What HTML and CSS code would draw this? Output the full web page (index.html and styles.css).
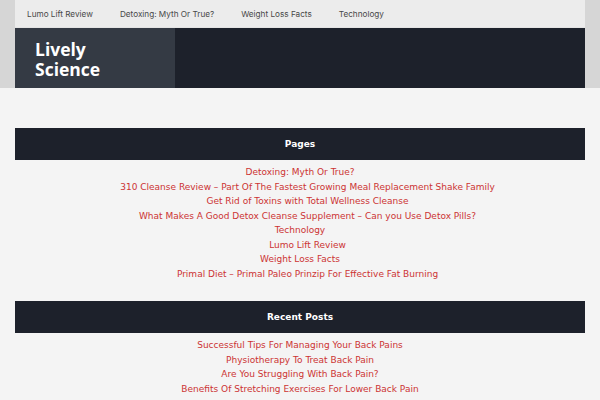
FILE: index.html
```html
<!DOCTYPE html>
<html>
<head>
<meta charset="utf-8">
<link rel="stylesheet" href="styles.css">
</head>
<body>
<div class="top">
  <div class="wrap">
    <nav class="nav">
      <a href="#">Lumo Lift Review</a>
      <a href="#">Detoxing: Myth Or True?</a>
      <a href="#">Weight Loss Facts</a>
      <a href="#">Technology</a>
    </nav>
    <header class="header">
      <div class="brand">Lively<br>Science</div>
    </header>
  </div>
</div>
<main class="main">
  <section class="widget">
    <h2 class="widget-title">Pages</h2>
    <ul class="links">
      <li><a href="#">Detoxing: Myth Or True?</a></li>
      <li class="sub"><a href="#">310 Cleanse Review – Part Of The Fastest Growing Meal Replacement Shake Family</a></li>
      <li class="sub"><a href="#">Get Rid of Toxins with Total Wellness Cleanse</a></li>
      <li class="sub"><a href="#">What Makes A Good Detox Cleanse Supplement – Can you Use Detox Pills?</a></li>
      <li><a href="#">Technology</a></li>
      <li class="sub"><a href="#">Lumo Lift Review</a></li>
      <li><a href="#">Weight Loss Facts</a></li>
      <li class="sub"><a href="#">Primal Diet – Primal Paleo Prinzip For Effective Fat Burning</a></li>
    </ul>
  </section>
  <section class="widget">
    <h2 class="widget-title">Recent Posts</h2>
    <ul class="links">
      <li><a href="#">Successful Tips For Managing Your Back Pains</a></li>
      <li><a href="#">Physiotherapy To Treat Back Pain</a></li>
      <li><a href="#">Are You Struggling With Back Pain?</a></li>
      <li><a href="#">Benefits Of Stretching Exercises For Lower Back Pain</a></li>
    </ul>
  </section>
</main>
</body>
</html>
```

FILE: styles.css
```css
html, body {
  margin: 0;
  padding: 0;
}
body {
  background: #f4f4f4;
  font-family: "DejaVu Sans", Verdana, sans-serif;
}
.top {
  background: #d6d6d6;
  padding: 0 15px;
}
.wrap {
  background: #ececec;
}
.nav {
  display: flex;
  height: 28px;
  align-items: center;
  padding-left: 12px;
  gap: 27px;
  border-bottom: 1px solid #e4e4e4;
  box-sizing: border-box;
}
.nav a {
  font-family: Inter, "Open Sans", sans-serif;
  font-size: 8.2px;
  color: #484848;
  text-decoration: none;
}
.header {
  background: #1d212b;
  height: 60px;
  display: flex;
}
.brand {
  width: 160px;
  background: #343a44;
  color: #fff;
  font-family: "Open Sans", sans-serif;
  font-weight: 700;
  font-size: 17.5px;
  line-height: 20px;
  padding: 11px 0 0 20px;
  box-sizing: border-box;
}
.main {
  padding: 40px 15px 0;
}
.widget {
  margin-bottom: 20px;
}
.widget-title {
  background: #1d212b;
  color: #fff;
  margin: 0;
  height: 32px;
  line-height: 32px;
  text-align: center;
  font-size: 9px;
  font-weight: 700;
}
.links {
  list-style: none;
  margin: 0;
  padding: 5px 0 0;
  text-align: center;
}
.links li {
  font-size: 9px;
  line-height: 14.5px;
}
.links li.sub {
  padding-left: 15px;
}
.links a {
  color: #cc3333;
  text-decoration: none;
}
```
